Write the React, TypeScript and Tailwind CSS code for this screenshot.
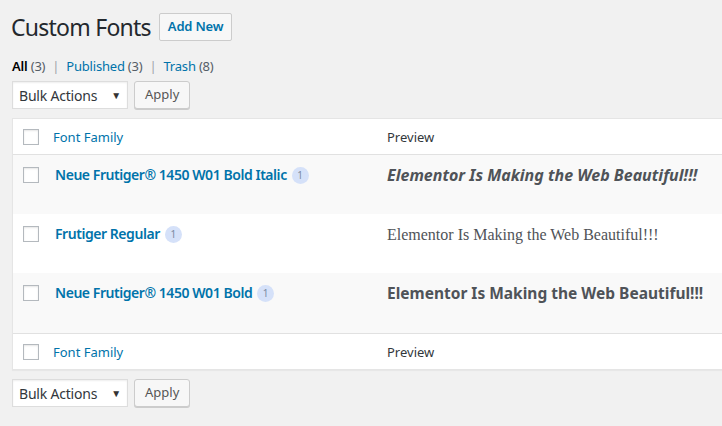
const FONT = { fontFamily: '"Noto Sans", "Open Sans", sans-serif' };

const ROWS = [
  {
    name: "Neue Frutiger® 1450 W01 Bold Italic",
    preview: "font-bold italic text-[16px]",
    serif: false,
    bg: "bg-[#f9f9f9]",
  },
  { name: "Frutiger Regular", preview: "text-[16px]", serif: true, bg: "bg-white" },
  {
    name: "Neue Frutiger® 1450 W01 Bold",
    preview: "font-bold text-[15.5px]",
    serif: false,
    bg: "bg-[#f9f9f9]",
  },
];

function Checkbox() {
  return (
    <span className="block h-4 w-4 shrink-0 border border-[#b4b9be] bg-white shadow-[inset_0_1px_2px_rgba(0,0,0,0.1)]" />
  );
}

function BulkBar() {
  return (
    <div className="flex items-center gap-[6px]">
      <div className="flex h-[28px] w-[116px] items-center justify-between border border-[#ddd] bg-white pl-[6px] pr-[6px] text-[14px] tracking-[-0.2px] text-[#32373c] shadow-[inset_0_1px_2px_rgba(0,0,0,0.07)]">
        <span>Bulk Actions</span>
        <span className="text-[10px] text-[#333]">▼</span>
      </div>
      <button
        type="button"
        className="h-[28px] rounded-[3px] border border-[#ccc] bg-[#f7f7f7] px-[10px] text-[13px] text-[#555] shadow-[0_1px_0_#ccc]"
      >
        Apply
      </button>
    </div>
  );
}

function HeadRow({ top }: { top?: boolean }) {
  return (
    <div
      className={`flex h-[36px] items-center bg-white ${top ? "border-b border-[#e1e1e1]" : "border-t border-[#e1e1e1]"}`}
    >
      <div className="w-[26px] pl-[10px]">
        <Checkbox />
      </div>
      <div className="w-[338px] pl-[14px] pt-[2px] text-[13px] text-[#0073aa]">Font Family</div>
      <div className="pl-[10px] pt-[2px] text-[13px] text-[#32373c]">Preview</div>
    </div>
  );
}

export default function App() {
  return (
    <div className="h-[426px] w-[722px] overflow-hidden bg-[#f1f1f1] pl-[12px] text-[#23282d]" style={FONT}>
      <div className="flex items-center gap-[8px] pt-[12px]">
        <h1 className="-ml-[1px] text-[23px] font-normal leading-[30px] tracking-[-0.75px] text-[#23282d]">
          Custom Fonts
        </h1>
        <span className="rounded-[2px] border border-[#ccc] bg-[#f7f7f7] px-[8px] py-[3px] text-[13px] font-semibold tracking-[-0.2px] text-[#0073aa]">
          Add New
        </span>
      </div>

      <div className="mt-[14px] flex items-center gap-[7px] text-[13px] leading-[20px] tracking-[-0.2px] text-[#555d66]">
        <span>
          <span className="font-semibold text-black">All</span> (3)
        </span>
        <span className="text-[#a0a5aa]">|</span>
        <span>
          <span className="text-[#0073aa]">Published</span> (3)
        </span>
        <span className="text-[#a0a5aa]">|</span>
        <span>
          <span className="text-[#0073aa]">Trash</span> (8)
        </span>
      </div>

      <div className="mt-[5px]">
        <BulkBar />
      </div>

      <div className="mt-[9px] w-[730px] border border-[#e5e5e5] shadow-[0_1px_1px_rgba(0,0,0,0.04)]">
        <HeadRow top />
        {ROWS.map((r, i) => (
          <div key={r.name} className={`flex items-start ${r.bg} ${i === 2 ? "h-[60px]" : "h-[59px]"} pt-[11px]`}>
            <div className="w-[26px] pl-[10px] pt-[1px]">
              <Checkbox />
            </div>
            <div className="flex w-[338px] items-center gap-[5px] pl-[16px]">
              <span className="text-[14px] font-semibold leading-[18px] tracking-[-0.45px] text-[#0073aa]">
                {r.name}
              </span>
              <span className="flex h-[17px] w-[17px] items-center justify-center rounded-full bg-[#d5e1f9] text-[10px] text-[#7c8aa0]">
                1
              </span>
            </div>
            <div
              className={`pl-[10px] leading-[19px] text-[#4f5358] ${r.preview}`}
              style={r.serif ? { fontFamily: '"Liberation Serif", serif' } : undefined}
            >
              Elementor Is Making the Web Beautiful!!!
            </div>
          </div>
        ))}
        <HeadRow />
      </div>

      <div className="mt-[9px]">
        <BulkBar />
      </div>
    </div>
  );
}
